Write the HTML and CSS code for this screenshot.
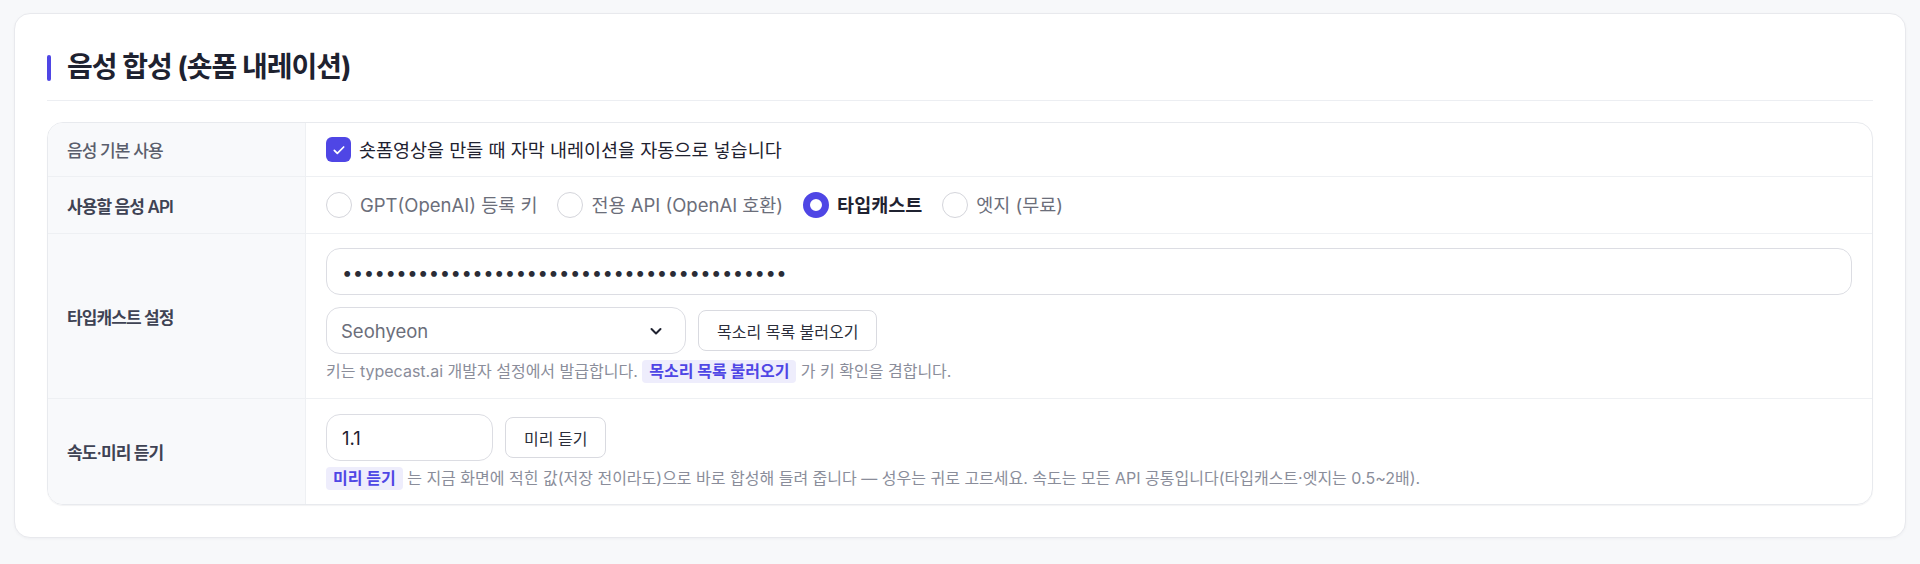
FILE: index.html
```html
<!DOCTYPE html>
<html lang="ko">
<head>
<meta charset="utf-8">
<title>음성 합성 설정</title>
<link rel="stylesheet" href="styles.css">
</head>
<body>
<section class="card">
  <h2 class="card-title">음성 합성 (숏폼 내레이션)</h2>
  <div class="table">
    <div class="row">
      <div class="label label-light">음성 기본 사용</div>
      <div class="cell cell-line">
        <label class="check">
          <span class="checkbox"><svg viewBox="0 0 24 24" width="16" height="16"><path d="M5 12.5l4.5 4.5L19 7.5" fill="none" stroke="#fff" stroke-width="2.6" stroke-linecap="round" stroke-linejoin="round"/></svg></span>
          <span class="check-text">숏폼영상을 만들 때 자막 내레이션을 자동으로 넣습니다</span>
        </label>
      </div>
    </div>
    <div class="row">
      <div class="label">사용할 음성 API</div>
      <div class="cell cell-line radios">
        <label class="radio-item"><span class="radio"></span><span>GPT(OpenAI) 등록 키</span></label>
        <label class="radio-item"><span class="radio"></span><span>전용 API (OpenAI 호환)</span></label>
        <label class="radio-item selected"><span class="radio"></span><span>타입캐스트</span></label>
        <label class="radio-item"><span class="radio"></span><span>엣지 (무료)</span></label>
      </div>
    </div>
    <div class="row">
      <div class="label">타입캐스트 설정</div>
      <div class="cell stack">
        <input class="field field-wide" type="password" value="abcdefghijklmnopqrstuvwxyzabcdefghijklmno" aria-label="API 키">
        <div class="inline">
          <div class="field select"><span>Seohyeon</span><svg viewBox="0 0 16 16" width="16" height="16"><path d="M3.5 6l4.5 4.5L12.5 6" fill="none" stroke="#1f2230" stroke-width="2" stroke-linecap="round" stroke-linejoin="round"/></svg></div>
          <button class="btn" type="button">목소리 목록 불러오기</button>
        </div>
        <p class="help">키는 typecast.ai 개발자 설정에서 발급합니다. <span class="tag">목소리 목록 불러오기</span> 가 키 확인을 겸합니다.</p>
      </div>
    </div>
    <div class="row row-last">
      <div class="label">속도·미리 듣기</div>
      <div class="cell stack">
        <div class="inline">
          <input class="field field-speed" type="text" value="1.1" aria-label="속도">
          <button class="btn" type="button">미리 듣기</button>
        </div>
        <p class="help"><span class="tag">미리 듣기</span> 는 지금 화면에 적힌 값(저장 전이라도)으로 바로 합성해 들려 줍니다 — 성우는 귀로 고르세요. 속도는 모든 API 공통입니다(타입캐스트·엣지는 0.5~2배).</p>
      </div>
    </div>
  </div>
</section>
</body>
</html>
```
FILE: styles.css
```css
* { box-sizing: border-box; }
html, body { margin: 0; }
body {
  background: #f7f8fa;
  padding: 13px 14px;
  font-family: "Inter", "Noto Sans CJK KR", sans-serif;
  color: #1f2230;
}
.card {
  background: #fff;
  border: 1px solid #e8e9ed;
  border-radius: 16px;
  box-shadow: 0 1px 3px rgba(20, 24, 40, 0.04);
  padding: 32px 32px 32px;
}
.card-title {
  margin: 0 0 21px;
  height: 55px;
  padding-bottom: 12px;
  border-bottom: 1px solid #eceef2;
  display: flex;
  align-items: center;
  gap: 16px;
  font-size: 28px;
  font-weight: 700;
  color: #1e2230;
  line-height: 42px;
  letter-spacing: -1px;
}
.card-title::before {
  content: "";
  width: 4px;
  height: 26px;
  border-radius: 2px;
  background: #4f46e5;
  margin-top: 1px;
}
.table {
  border: 1px solid #e8eaee;
  border-radius: 16px;
  overflow: hidden;
  box-shadow: 0 1px 1px rgba(20, 24, 40, 0.05);
}
.row {
  display: grid;
  grid-template-columns: 258px 1fr;
  border-bottom: 1px solid #eef0f3;
}
.row-last { border-bottom: none; }
.label {
  background: #f8f9fb;
  border-right: 1px solid #eef0f3;
  display: flex;
  align-items: center;
  padding: 0 19px;
  font-size: 17px;
  letter-spacing: -0.9px;
  font-weight: 600;
  color: #3f4354;
}
.label-light { font-weight: 500; color: #5a5e6c; }
.cell { padding: 14px 20px; }
.cell-line {
  display: flex;
  align-items: center;
  font-size: 18.5px;
  line-height: 24px;
  min-height: 52px;
}
.radios { min-height: 56px; gap: 20px; }
.check { display: flex; align-items: center; gap: 8px; color: #1f2230; }
.checkbox {
  width: 25px;
  height: 25px;
  border-radius: 6px;
  background: #4f46e5;
  display: flex;
  align-items: center;
  justify-content: center;
}
.radio-item { display: flex; align-items: center; gap: 8px; color: #6b6e7a; }
.radio {
  width: 26px;
  height: 26px;
  border-radius: 50%;
  border: 1.5px solid #d4d5db;
  background: #fff;
}
.radio-item.selected { color: #1f2230; font-weight: 600; }
.radio-item.selected .radio { border: 7.5px solid #4f46e5; }
.stack { display: flex; flex-direction: column; padding-bottom: 15px; }
.row-last .stack { padding-top: 15px; padding-bottom: 14px; }
.inline { display: flex; align-items: center; gap: 12px; margin-top: 12px; }
.row-last .inline { margin-top: 0; }
.field {
  height: 47px;
  border: 1px solid #dcdde3;
  border-radius: 14px;
  background: #fff;
  font-family: inherit;
  font-size: 18.5px;
  color: #1f2230;
  padding: 0 15px;
  outline: none;
}
.field-wide { width: 100%; letter-spacing: 0.45px; color: #2a2c36; }
.select {
  width: 360px;
  display: flex;
  align-items: center;
  justify-content: space-between;
  padding: 0 21px 0 14px;
  color: #6b6e7a;
}
.field-speed { width: 167px; }
.btn {
  height: 41px;
  padding: 0 18px;
  border: 1px solid #d9dae0;
  border-radius: 8px;
  background: #fff;
  font-family: inherit;
  font-size: 16px;
  color: #2b2e3a;
}
.help {
  margin: 6px 0 0;
  line-height: 22px;
  font-size: 16px;
  color: #8a8d9a;
}
.tag {
  display: inline-block;
  padding: 0 7px;
  line-height: 23px;
  border-radius: 4px;
  background: #eeedfc;
  color: #4f46e5;
  font-weight: 700;
}
```
